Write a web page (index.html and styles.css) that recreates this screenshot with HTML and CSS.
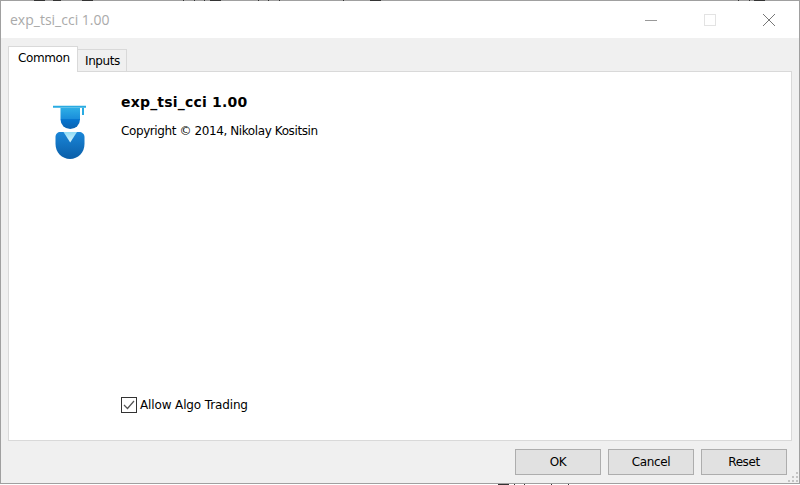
FILE: index.html
```html
<!DOCTYPE html>
<html lang="en">
<head>
  <meta charset="UTF-8">
  <title>exp_tsi_cci 1.00</title>
  <link rel="stylesheet" href="styles.css">
</head>
<body>

  <div class="window">
    <header class="titlebar">
      <div class="title">exp_tsi_cci 1.00</div>
      <div class="window-controls">
        <svg width="14" height="14" viewBox="0 0 14 14"><path d="M1 7.5H13" stroke="#999" fill="none"/></svg>
        <svg width="14" height="14" viewBox="0 0 14 14"><rect x="1.5" y="1.5" width="11" height="11" stroke="#e3e3e3" fill="none"/></svg>
        <svg width="14" height="14" viewBox="0 0 14 14"><path d="M1 1L13 13M13 1L1 13" stroke="#777" stroke-width="1" fill="none"/></svg>
      </div>
    </header>

    <div class="content">
      <div class="tabs">
        <div class="tab active">Common</div>
        <div class="tab">Inputs</div>
      </div>

      <div class="panel">
        <div class="about">
          <svg class="logo" width="36" height="56" viewBox="0 0 36 56">
            <defs>
              <linearGradient id="headFill" x1="0" y1="0" x2="0" y2="1">
                <stop offset="0" stop-color="#2eaee6"/>
                <stop offset="0.5" stop-color="#1b8fdb"/>
                <stop offset="0.55" stop-color="#0675cf"/>
                <stop offset="1" stop-color="#0a62b0"/>
              </linearGradient>
              <linearGradient id="bodyFill" x1="0" y1="0" x2="0" y2="1">
                <stop offset="0" stop-color="#1a86d8"/>
                <stop offset="1" stop-color="#0a5ea8"/>
              </linearGradient>
              <linearGradient id="neckFill" x1="0" y1="0" x2="0" y2="1">
                <stop offset="0" stop-color="#8fdcf6"/>
                <stop offset="1" stop-color="#d8f3fc"/>
              </linearGradient>
            </defs>
            <path d="M0 2.700H33V4.700H0Z" fill="#29abe2"/>
            <path d="M29 4.700H31V12H29Z" fill="#29abe2"/>
            <path d="M7.500 5H27V16.250A9.750 9.750 0 0 1 7.500 16.250Z" fill="url(#headFill)"/>
            <path d="M7.500 29H26C29 29 31.500 31 31.500 34V41C31.500 49.500 25 56 17 56C9 56 2.500 49.500 2.500 41V34C2.500 31 4.500 29 7.500 29Z" fill="url(#bodyFill)"/>
            <path d="M10.500 29H24L17.200 39.500Z" fill="url(#neckFill)"/>
          </svg>
          <div class="about-text">
            <h1>exp_tsi_cci 1.00</h1>
            <p>Copyright © 2014, Nikolay Kositsin</p>
          </div>
        </div>

        <label class="allow">
          <svg width="16" height="16" viewBox="0 0 16 16">
            <rect x="0.500" y="0.500" width="15" height="15" fill="#fff" stroke="#333"/>
            <path d="M3 8L6.500 11.500L13 4" stroke="#555" stroke-width="1.200" fill="none"/>
          </svg>
          <span>Allow Algo Trading</span>
        </label>
      </div>

      <div class="buttons">
        <button>OK</button>
        <button>Cancel</button>
        <button>Reset</button>
      </div>
    </div>

    <svg class="gripper" width="11" height="11" viewBox="0 0 11 11">
      <path d="M8 0h2v2H8zM4 4h2v2H4zM8 4h2v2H8zM0 8h2v2H0zM4 8h2v2H4zM8 8h2v2H8z" fill="#c4c4c4"/>
    </svg>
  </div>

  <!-- bits of the window behind, showing along the edges -->
  <svg class="behind top" width="800" height="1">
    <path d="M34 0h11v1H34zM53 0h8v1H53zM82 0h11v1H82zM183 0h1v1h-1zM194 0h1v1h-1zM204 0h1v1h-1zM210 0h11v1h-11zM258 0h1v1h-1zM268 0h1v1h-1zM279 0h1v1h-1zM343 0h1v1h-1zM370 0h11v1h-11zM738 0h1v1h-1zM749 0h1v1h-1zM754 0h11v1h-11z" fill="#333"/>
  </svg>
  <svg class="behind bottom" width="800" height="1">
    <path d="M498 0h11v1h-11zM514 0h1v1h-1zM524 0h1v1h-1zM551 0h1v1h-1zM568 0h1v1h-1z" fill="#333"/>
  </svg>

</body>
</html>
```

FILE: styles.css
```css
body {
  margin: 0;
  width: 800px;
  height: 485px;
  overflow: hidden;
  background-color: #fff;
  font-family: 'DejaVu Sans', sans-serif;
  font-size: 12px;
  letter-spacing: -0.4px;
  color: #000;
  position: relative;
}

.window {
  box-sizing: border-box;
  width: 800px;
  height: 484px;
  border: 1px solid #a0a0a0;
  display: flex;
  flex-direction: column;
  position: relative;
}

.titlebar {
  height: 37px;
  background-color: #fff;
  display: flex;
  justify-content: space-between;
  align-items: center;
  flex-shrink: 0;
}

.title {
  font-family: 'Open Sans', sans-serif;
  font-size: 14px;
  letter-spacing: 0;
  color: #aaa;
  margin-left: 9px;
}

.window-controls {
  display: flex;
  gap: 45px;
  margin-right: 23px;
}

.content {
  flex: 1;
  background-color: #f0f0f0;
  padding: 8px 7px 0;
  display: flex;
  flex-direction: column;
}

.tabs {
  display: flex;
  align-items: flex-end;
  height: 26px;
  position: relative;
  z-index: 1;
}

.tab {
  box-sizing: border-box;
  height: 23px;
  padding: 4px 6px 0 7px;
  background-color: #f0f0f0;
  border: 1px solid #d9d9d9;
  border-left: 0;
}

.tab.active {
  height: 26px;
  width: 70px;
  padding: 4px 0 0 9px;
  background-color: #fff;
  border-left: 1px solid #d9d9d9;
  border-bottom: 0;
}

.panel {
  box-sizing: border-box;
  height: 370px;
  margin-top: -1px;
  background-color: #fff;
  border: 1px solid #d9d9d9;
  display: flex;
  flex-direction: column;
  justify-content: space-between;
  padding: 0 0 27px 112px;
}

.about {
  display: flex;
  position: relative;
}

.logo {
  position: absolute;
  left: -68px;
  top: 31px;
}

.about-text h1 {
  font-size: 14px;
  font-weight: bold;
  margin: 22px 0 0;
  letter-spacing: 0.2px;
}

.about-text p {
  margin: 14px 0 0;
}

.allow {
  display: flex;
  align-items: center;
  gap: 3px;
  letter-spacing: -0.13px;
}

.buttons {
  display: flex;
  justify-content: flex-end;
  gap: 7px;
  margin-top: 8px;
  margin-right: 5px;
}

button {
  width: 86px;
  height: 26px;
  padding: 0;
  font: inherit;
  letter-spacing: inherit;
  background-color: #e1e1e1;
  border: 1px solid #adadad;
}

.gripper {
  position: absolute;
  right: 0;
  bottom: 0;
}

.behind {
  position: absolute;
  left: 0;
  display: block;
}

.behind.top {
  top: 0;
}

.behind.bottom {
  top: 484px;
}
```
